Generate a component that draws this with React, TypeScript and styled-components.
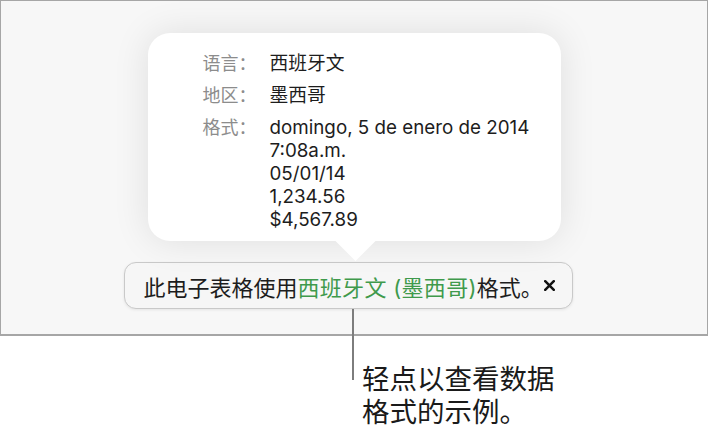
import styled, { createGlobalStyle } from "styled-components";

const Global = createGlobalStyle`
  html, body {
    margin: 0;
    padding: 0;
    background: #ffffff;
  }
  body {
    font-family: Inter, "Noto Sans CJK SC", sans-serif;
    color: #1d1d1d;
  }
`;

const Page = styled.div`
  width: 708px;
  height: 436px;
  overflow: hidden;
`;

const Frame = styled.div`
  box-sizing: border-box;
  width: 708px;
  height: 336px;
  border: 1px solid #a6a6a6;
  border-bottom-width: 2px;
  background: #f7f7f7;
  padding-top: 32px;
  display: flex;
  flex-direction: column;
  align-items: center;
`;

const Popover = styled.div`
  position: relative;
  box-sizing: border-box;
  width: 413px;
  height: 208px;
  padding: 19px 0 0 55px;
  background: #ffffff;
  border-radius: 22px;
  box-shadow: 0 0 36px rgba(0, 0, 0, 0.1);
  display: grid;
  grid-template-columns: 67px 1fr;
  row-gap: 9px;
  align-content: start;

  &::after {
    content: "";
    position: absolute;
    left: 187px;
    bottom: -20px;
    width: 42px;
    height: 21px;
    background: #ffffff;
    clip-path: polygon(0 0, 100% 0, 50% 100%);
  }
`;

const Label = styled.div`
  font-size: 18px;
  line-height: 23px;
  color: #8c8c8c;
`;

const Value = styled.div`
  font-size: 18.8px;
  line-height: 23px;
  color: #1d1d1d;
`;

const Bar = styled.div`
  box-sizing: border-box;
  width: 449px;
  height: 47px;
  margin-top: 21px;
  margin-right: 12px;
  padding: 0 0 0 19px;
  display: flex;
  align-items: center;
  background: #f6f6f6;
  border: 1.5px solid #c9c9c9;
  border-radius: 12px;
  box-shadow: 0 1px 3px rgba(0, 0, 0, 0.08);
  font-size: 22px;
  color: #1d1d1d;
  white-space: nowrap;
`;

const Accent = styled.span`
  color: #3f9a4c;
  letter-spacing: 0.3px;
`;

const Close = styled.svg`
  margin-left: 1px;
  flex: none;
`;

const Callout = styled.div`
  display: flex;
  align-items: flex-start;
  margin-left: 352px;
  margin-top: -27px;
`;

const Leader = styled.div`
  width: 2px;
  height: 71px;
  background: #7d7d7d;
  flex: none;
`;

const Caption = styled.div`
  margin-left: 8px;
  margin-top: 54px;
  font-size: 27.5px;
  line-height: 33px;
  color: #1a1a1a;
`;

export default function App() {
  const rows = [
    { label: "语言：", value: ["西班牙文"] },
    { label: "地区：", value: ["墨西哥"] },
    {
      label: "格式：",
      value: [
        "domingo, 5 de enero de 2014",
        "7:08a.m.",
        "05/01/14",
        "1,234.56",
        "$4,567.89",
      ],
    },
  ];

  return (
    <Page>
      <Global />
      <Frame>
        <Popover>
          {rows.map((row) => (
            <>
              <Label key={row.label + "l"}>{row.label}</Label>
              <Value key={row.label + "v"}>
                {row.value.map((line) => (
                  <div key={line}>{line}</div>
                ))}
              </Value>
            </>
          ))}
        </Popover>
        <Bar>
          此电子表格使用<Accent>西班牙文 (墨西哥)</Accent>格式。
          <Close width="11" height="11" viewBox="0 0 11 11">
            <path
              d="M1.2 1.2 L9.8 9.8 M9.8 1.2 L1.2 9.8"
              stroke="#111"
              strokeWidth="2.5"
              strokeLinecap="round"
            />
          </Close>
        </Bar>
      </Frame>
      <Callout>
        <Leader />
        <Caption>
          轻点以查看数据
          <br />
          格式的示例。
        </Caption>
      </Callout>
    </Page>
  );
}
